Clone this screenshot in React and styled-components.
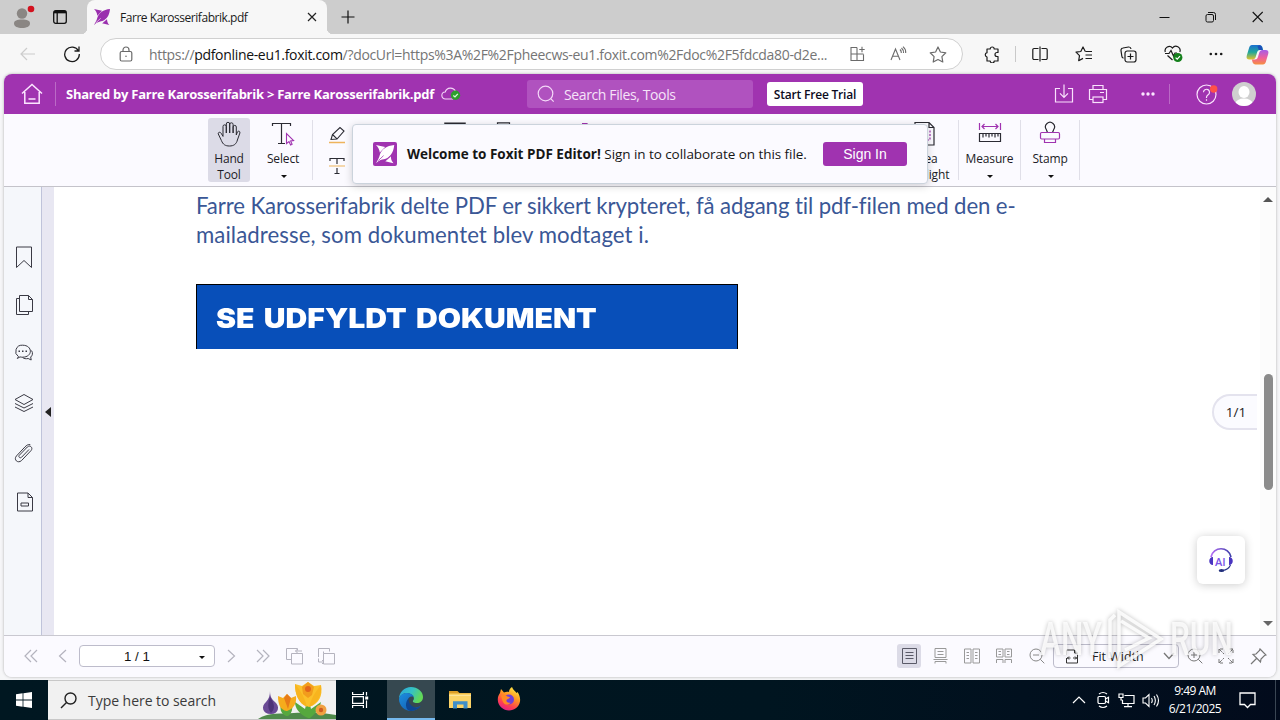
import React from 'react'
import styled, { createGlobalStyle } from 'styled-components'

function Svg({ w, h, ml, children, ...rest }) {
    return (
        <Icon width={w} height={h} viewBox={`0 0 ${w} ${h}`} $ml={ml} {...rest}>
            {children}
        </Icon>
    )
}

function FoxLogo({ size, ml, tile }) {
    return (
        <Icon width={size} height={size} viewBox="0 0 24 24" $ml={ml} stroke="none">
            {tile && <rect width="24" height="24" rx="2" fill="#a033b0" />}
            <g fill={tile ? '#fff' : '#9a2fae'} transform={tile ? 'translate(3 3) scale(.76)' : undefined}>
                <path d="M0 0l12 2.500L5 10C4.500 5.500 2.500 2.500 0 0z" />
                <path d="M24 0c-1 8-3 13-9 17-3 1.800-6 1.500-9 2.800C4 20.700 2 22 0 24c2-4 4-7 5-11C7 6 14 1 24 0z" />
                <path d="M23 24l-11-2.500 7.500-7c0 4 1 6.500 3.500 9.500z" />
                <path d="M19.500 14.500l-8 7" stroke={tile ? '#a033b0' : '#f7f7f7'} strokeWidth="1.200" fill="none" />
                <path d="M3 20.500L10 14" stroke={tile ? '#a033b0' : '#f7f7f7'} strokeWidth="1" fill="none" />
            </g>
        </Icon>
    )
}

function Tabs() {
    return (
        <TabStrip>
            <Svg w={26} h={26} ml={11} stroke="none">
                <circle cx="11" cy="9.500" r="5.200" fill="#8a8683" />
                <path d="M3 19.500c0-3 3-4 8-4s8 1 8 4-3.500 4.500-8 4.500-8-1.500-8-4.500z" fill="#8a8683" />
                <circle cx="20" cy="5" r="3.300" fill="#d3121f" />
            </Svg>
            <Svg w={14} h={14} ml={16} stroke="#111" strokeWidth="1.300">
                <rect x=".7" y=".7" width="12.600" height="12.600" rx="2" />
                <path d="M1 2.500h12M4.200 3v10" />
                <path d="M1 2h12" strokeWidth="2.200" />
            </Svg>
            <Tab>
                <FoxLogo size={16} ml={7} />
                <TabTitle>Farre Karosserifabrik.pdf</TabTitle>
                <Svg w={10} h={10} stroke="#222" strokeWidth="1.200">
                    <path d="M1 1l8 8M9 1l-8 8" />
                </Svg>
            </Tab>
            <Svg w={14} h={14} ml={14} stroke="#111" strokeWidth="1.200">
                <path d="M7 .5v13M.5 7h13" />
            </Svg>
            <Spacer />
            <Svg w={11} h={12} stroke="#111"><path d="M.5 6.500h10" /></Svg>
            <Svg w={11} h={12} ml={35} stroke="#111">
                <rect x="1" y="3.500" width="7.500" height="7.500" rx="1.500" />
                <path d="M3 1.500h5.500a2 2 0 0 1 2 2V9" />
            </Svg>
            <Svg w={11} h={12} ml={36} stroke="#111" strokeWidth="1.100">
                <path d="M.7 1l10 10M10.700 1l-10 10" />
            </Svg>
            <Gap $w={17} />
        </TabStrip>
    )
}

function AddressBar() {
    return (
        <NavBar>
            <Svg w={16} h={14} ml={20} stroke="#ccc" strokeWidth="1.200">
                <path d="M7 1L1 7l6 6M1 7h14" />
            </Svg>
            <Svg w={18} h={18} ml={27} stroke="#1b1b1b" strokeWidth="1.300">
                <path d="M15.500 6A7.300 7.300 0 1 0 16.300 9M16 1.500V6h-4.500" />
            </Svg>
            <UrlField>
                <Svg w={14} h={16} ml={18} stroke="#6a6a6a" strokeWidth="1.200">
                    <rect x="1.200" y="5.500" width="11.600" height="9.500" rx="1.500" />
                    <path d="M4 5.500V4a3 3 0 0 1 6 0v1.500" />
                    <circle cx="7" cy="10.200" r=".8" fill="#6a6a6a" stroke="none" />
                </Svg>
                <Url>https://<b>pdfonline-eu1.foxit.com</b>/?docUrl=https%3A%2F%2Fpheecws-eu1.foxit.com%2Fdoc%2F5fdcda80-d2e...</Url>
                <Spacer />
                <Svg w={16} h={16} stroke="#6b6b6b" strokeWidth="1.100">
                    <path d="M7 1.500H1v13h12.500V8.500M1 8h12.500M7 1.500v13M12 .8v5.400M9.300 3.500h5.400" />
                </Svg>
                <Svg w={17} h={16} ml={24} stroke="#6b6b6b" strokeWidth="1.100">
                    <path d="M1 14L5.500 3 10 14M2.600 10.300h5.800M10 3.500q1.500 1.500 1.300 3.500M11.500 2q2.300 2 2 5M13 .7q3 2.500 2.700 6.300" />
                </Svg>
                <Svg w={18} h={17} ml={22} stroke="#6b6b6b" strokeWidth="1.200" strokeLinejoin="round">
                    <path d="M9 1l2.400 5 5.400.8-3.900 3.800.9 5.400L9 13.500 4.200 16l.9-5.400L1.200 6.800l5.400-.8z" />
                </Svg>
                <Gap $w={15} />
            </UrlField>
            <Svg w={16} h={17} ml={21} stroke="#1b1b1b" strokeWidth="1.200" strokeLinejoin="round">
                <path d="M3 3h3.200a2 2 0 0 1 4 0H14v3.500h-1a2 2 0 0 0 0 4h1V15h-3.800a2 2 0 0 1-4 0H3v-4a2.200 2.200 0 0 1 0-4.300z" />
            </Svg>
            <VLine $h={16} $ml={15} $color="#c9c9c9" />
            <Svg w={16} h={16} ml={16} stroke="#1b1b1b" strokeWidth="1.200">
                <path d="M6.500 2.500H2a1.200 1.200 0 0 0-1.200 1.200v8.600A1.200 1.200 0 0 0 2 13.500h4.500M9.500 2.500H14a1.200 1.200 0 0 1 1.200 1.200v8.600a1.200 1.200 0 0 1-1.200 1.200H9.500M8 .5v15" />
            </Svg>
            <Svg w={18} h={16} ml={27} stroke="#1b1b1b" strokeWidth="1.200" strokeLinejoin="round">
                <path d="M10.300 5.500L8 1 5.800 5.500 1 6.200l3.500 3.500-.8 5L8 12.400M10.500 5.500H17M10.500 9H17M10.500 12.500H17" />
            </Svg>
            <Svg w={17} h={17} ml={27} stroke="#1b1b1b" strokeWidth="1.200">
                <rect x="5" y="5" width="11" height="11" rx="2.200" />
                <path d="M10.500 7.500v6M7.500 10.500h6M3.500 12.300A2.500 2.500 0 0 1 1.800 10L1 4.600A2.300 2.300 0 0 1 3 2L8.500 1a2.300 2.300 0 0 1 2.500 2" />
            </Svg>
            <Svg w={20} h={18} ml={27} stroke="#1b1b1b" strokeWidth="1.200">
                <path d="M1.300 7A4.200 4.200 0 0 1 8.500 3 4.200 4.200 0 0 1 15.800 7M1 8.500h4l2-3 2.500 5.500 1.500-3h2M3.500 10.500L8.500 15" />
                <circle cx="13.800" cy="12.500" r="4.600" fill="#14801c" stroke="none" />
                <path d="M11.600 12.600l1.600 1.500 2.800-3" stroke="#fff" />
            </Svg>
            <Svg w={14} h={4} ml={25} fill="#1b1b1b" stroke="none">
                <circle cx="1.800" cy="2" r="1.300" /><circle cx="7" cy="2" r="1.300" /><circle cx="12.200" cy="2" r="1.300" />
            </Svg>
            <Svg w={23} h={21} ml={23} stroke="none">
                <defs>
                    <linearGradient id="cpA" x1="0" y1="0" x2="0" y2="1">
                        <stop offset="0" stopColor="#1a6fd0" /><stop offset=".5" stopColor="#21a89a" /><stop offset="1" stopColor="#e4c32b" />
                    </linearGradient>
                    <linearGradient id="cpB" x1="0" y1="0" x2="0" y2="1">
                        <stop offset="0" stopColor="#a65be8" /><stop offset=".55" stopColor="#f05f9a" /><stop offset="1" stopColor="#f6903f" />
                    </linearGradient>
                </defs>
                <path d="M6 1h7.500c1.500 0 2.500 1 3 2.500l.6 2.500h-3c-2 0-2.600 1-3.200 3l-1.200 4c-.5 1.600-1.500 2.500-3 2.500H3.500C1 15.500 0 14 .8 11.500l2.400-8C3.700 2 4.500 1 6 1z" fill="url(#cpA)" />
                <path d="M13 1.200c1.600 0 2.500.8 3 2.300l.7 2.500h-3.900L11.500 2.500z" fill="#1c4fb8" />
                <path d="M17 20.500H9.500c-1.500 0-2.500-1-3-2.500l-.6-2.500h3c2 0 2.600-1 3.200-3l1.200-4C13.800 7 14.800 6 16.300 6h3.200c2.500 0 3.500 1.500 2.700 4l-2.400 8c-.5 1.500-1.300 2.500-2.800 2.500z" fill="url(#cpB)" />
            </Svg>
        </NavBar>
    )
}

function AppHeader() {
    return (
        <Header>
            <Svg w={22} h={22} ml={17} stroke="#fbe6ff" strokeWidth="1.500">
                <path d="M1 10.500L11 1.500l10 9M3.800 9v11.300h14.400V9M7.500 16h7" />
            </Svg>
            <VLine $h={24} $ml={12} $color="#bb6ac6" />
            <Crumbs>Shared by Farre Karosserifabrik &gt; Farre Karosserifabrik.pdf</Crumbs>
            <Svg w={20} h={14} stroke="#f3d6f7" strokeWidth="1.100">
                <path d="M12 12H4.500a3.500 3.500 0 0 1-.3-7A5.500 5.500 0 0 1 14.500 4.500" />
                <circle cx="14.500" cy="8.300" r="4.700" fill="#2f9e2f" stroke="none" />
                <path d="M12.300 8.400l1.700 1.500 2.800-3" stroke="#d8ffd8" strokeWidth="1.300" />
            </Svg>
            <SearchBox>
                <Svg w={18} h={18} stroke="#f3d6f7" strokeWidth="1.200">
                    <circle cx="8.500" cy="8.500" r="7.300" /><path d="M13.700 13.700l3 3" />
                </Svg>
                <span>Search Files, Tools</span>
            </SearchBox>
            <TrialButton>Start Free Trial</TrialButton>
            <Spacer />
            <Svg w={20} h={20} stroke="#f9e2fc" strokeWidth="1.200">
                <path d="M6 4.500H1.500v13.500h17V4.500H14M10 .5V13M6 9.300l4 4 4-4" />
            </Svg>
            <Svg w={20} h={20} ml={14} stroke="#f9e2fc" strokeWidth="1.200">
                <path d="M5 5V1.500h10V5M5 15.500H1.500V5.500h17v10H15M12 8.500h4" />
                <rect x="5" y="13" width="10" height="5.500" />
            </Svg>
            <Svg w={14} h={4} ml={33} fill="#fbe6ff" stroke="none">
                <circle cx="2" cy="2" r="1.700" /><circle cx="7" cy="2" r="1.700" /><circle cx="12" cy="2" r="1.700" />
            </Svg>
            <VLine $h={20} $ml={14} $color="#bb6ac6" />
            <Svg w={22} h={22} ml={26} stroke="#f9e2fc" strokeWidth="1.200">
                <circle cx="10.500" cy="11.500" r="9.500" />
                <path d="M7.500 9.300a3 3 0 1 1 4.600 2.500c-1 .7-1.600 1.200-1.600 2.500v.7M10.500 16.300v1.400" />
                <circle cx="17.700" cy="6" r="3.700" fill="#ff5148" stroke="none" />
            </Svg>
            <Svg w={24} h={24} ml={14} stroke="none">
                <clipPath id="face"><circle cx="12" cy="12" r="12" /></clipPath>
                <g clipPath="url(#face)">
                    <rect width="24" height="24" fill="#cfcfcf" />
                    <ellipse cx="12" cy="10" rx="5.500" ry="6" fill="#fff" />
                    <ellipse cx="12" cy="21.500" rx="8.500" ry="5" fill="#fff" />
                </g>
            </Svg>
            <Gap $w={20} />
        </Header>
    )
}

function Ribbon() {
    return (
        <RibbonBar>
            <Gap $w={204} />
            <Tool $w={42} $active>
                <Svg w={24} h={26} stroke="#2b2b33" strokeWidth="1" strokeLinejoin="round" strokeLinecap="round">
                    <path d="M6 15V5.500a1.600 1.600 0 0 1 3.300 0V12 3a1.700 1.700 0 0 1 3.400 0v9V3.500a1.700 1.700 0 0 1 3.400 0V12 6a1.600 1.600 0 0 1 3.200 0v8l1-3c1-1.600 3.100-.8 2.600 1l-2.500 7c-1 4-3.500 6-8 6-4 0-6.500-1.500-8-5.500L1.300 13c-.5-1.700 1.700-2.500 2.700-1z" />
                </Svg>
                <ToolName>Hand</ToolName>
                <ToolName>Tool</ToolName>
            </Tool>
            <Tool $w={48} $ml={9}>
                <Svg w={24} h={26} stroke="#2b2b33" strokeWidth="1.200">
                    <path d="M1.500 5V2.500h18V5M10.500 2.500v20M7 22.500h7" />
                    <path d="M15.500 12.500v10l2.500-2 1.600 3.500 1.500-.7-1.500-3.400 3-.4z" stroke="#a033b0" fill="#fbfaff" strokeWidth="1.100" />
                </Svg>
                <ToolName>Select</ToolName>
                <Caret />
            </Tool>
            <VLine $h={60} $ml={5} $color="#e0dfe8" />
            <SmallTools>
                <Svg w={18} h={18} stroke="#2b2b33" strokeWidth="1.100">
                    <path d="M3 13.500l1.500-5L12 1.500l4 3.500-7 8zM4.500 8.500L9 12.800" />
                    <path d="M1 16.500h16" stroke="#eeb45c" strokeWidth="1.300" />
                </Svg>
                <Svg w={18} h={18} stroke="#2b2b33" strokeWidth="1.200">
                    <path d="M2 4V1.500h14V4M9 1.500V7M9 11v5.500M6.500 16.500h5" />
                    <path d="M1 9h16" stroke="#eeb45c" />
                </Svg>
            </SmallTools>
            <Svg w={22} h={26} ml={98} stroke="#2b2b33" strokeWidth="1.500"><path d="M1 5.200h20v20H1z" /></Svg>
            <Svg w={16} h={26} ml={30} stroke="#2b2b33" strokeWidth="1.200"><path d="M1.500 25V4.800h12V25" /></Svg>
            <Svg w={12} h={26} ml={67} stroke="#a033b0" strokeWidth="1.200"><path d="M3 5.500h5v18" /></Svg>
            <Tool $w={52} $ml={308}>
                <Svg w={24} h={26} stroke="#2b2b33" strokeWidth="1.200">
                    <path d="M2 24V1.500h14l5 5V24zM16 1.500v5h5" />
                    <path d="M6 10h11v9H6z" stroke="#a033b0" strokeDasharray="2 1.500" />
                </Svg>
                <ToolName>Area</ToolName>
                <ToolName>Highlight</ToolName>
            </Tool>
            <VLine $h={60} $ml={7} $color="#e0dfe8" />
            <Tool $w={61}>
                <Svg w={24} h={26} stroke="#2b2b33" strokeWidth="1.200">
                    <path d="M1.500 2v7M22.500 2v7M4 5.500h16M6.500 3L4 5.500 6.500 8M17.500 3L20 5.500 17.500 8" stroke="#a033b0" />
                    <path d="M1.500 12.500h21v8h-21zM5 12.500v4M8 12.500v3M11 12.500v4M14 12.500v3M17 12.500v4M20 12.500v3" />
                </Svg>
                <ToolName>Measure</ToolName>
                <Caret />
            </Tool>
            <VLine $h={60} $color="#e0dfe8" />
            <Tool $w={58}>
                <Svg w={24} h={26} stroke="#2b2b33" strokeWidth="1.200">
                    <path d="M9.500 11.500L8.300 8.500a4.500 4.500 0 1 1 7.400 0L14.500 11.500" />
                    <rect x="2.500" y="11.500" width="19" height="6.500" rx="1.200" stroke="#a033b0" />
                    <path d="M6.500 18v3.500h11V18" stroke="#a033b0" />
                </Svg>
                <ToolName>Stamp</ToolName>
                <Caret />
            </Tool>
            <VLine $h={60} $color="#e0dfe8" />
            <Welcome>
                <FoxLogo size={24} tile />
                <p><b>Welcome to Foxit PDF Editor!</b> <span>Sign in to collaborate on this file.</span></p>
                <SignIn>Sign In</SignIn>
            </Welcome>
        </RibbonBar>
    )
}

function SidePanel() {
    return (
        <Side>
            <Svg w={22} h={24}><path d="M3.500 2h15v20.500L11 15.500l-7.500 7z" /></Svg>
            <Svg w={22} h={24}>
                <path d="M6.500 1.500h9l4 4v12h-13zM15.500 1.500v4h4M6.500 4.500h-3v16h12v-3" />
            </Svg>
            <Svg w={22} h={24}>
                <path d="M5.500 13.700A6.300 6.300 0 0 1 9.500 2.200c10.500 0 10.500 12 0 12-1 0-1.700-.1-2.500-.3L4.300 15.500zM18.500 7.500c1.700 2.500 1 5.200-.8 6.500l.5 3-3-1.500c-2.200.5-4.200.2-5.700-1" />
                <path d="M5.500 8.300h1.500M9 8.300h1.500M12.500 8.300H14" strokeWidth="1.500" />
            </Svg>
            <Svg w={22} h={24}>
                <path d="M11 2.500l9 5-9 5-9-5zM2 11.500l9 4.500 9-4.500M2 15l9 4.500 9-4.500" />
            </Svg>
            <Svg w={22} h={24}>
                <path d="M16 8.500l-7.500 7.800c-1.500 1.400-3.500-.5-2.200-2l8-8.300c2.700-2.500 6.200.8 3.700 3.600l-9.500 10c-3.700 3.300-8.300-1-5-4.700l8.500-9c1.500-1.500 3-2.800 5.300-2.200" />
            </Svg>
            <Svg w={22} h={24}>
                <path d="M4.500 3h10.500l4.500 4.500V21h-15zM15 3v4.500h4.500M8 13h7.500v3H8z" />
            </Svg>
        </Side>
    )
}

function AiHeadset() {
    return (
        <AiButton>
            <Svg w={26} h={26} stroke="#8b5cf0" strokeWidth="1.500">
                <defs>
                    <linearGradient id="arc" x1="0" x2="1"><stop offset="0" stopColor="#b46cf5" /><stop offset="1" stopColor="#3d3fa8" /></linearGradient>
                </defs>
                <path d="M3 10C5 -1 21 -1 23 10" stroke="url(#arc)" strokeWidth="1.700" />
                <path d="M22.500 18c-1.500 3.500-4 5-8 5.500" stroke="#29338f" strokeWidth="1.100" />
                <ellipse cx="13.500" cy="23.500" rx="2.800" ry="1.600" fill="#22307c" stroke="none" />
                <path d="M5 10v8c-5 0-5-8 0-8zM21 10v8c5 0 5-8 0-8z" fill="#4a35c0" stroke="none" />
            </Svg>
            <span>AI</span>
        </AiButton>
    )
}

function Viewer() {
    return (
        <Main>
            <SidePanel />
            <Gutter><i /></Gutter>
            <Page>
                <Line $ls={-0.1}>Farre Karosserifabrik delte PDF er sikkert krypteret, få adgang til pdf-filen med den e-</Line>
                <Line $ls={0.08}>mailadresse, som dokumentet blev modtaget i.</Line>
                <Banner><span>SE UDFYLDT DOKUMENT</span></Banner>
            </Page>
            <Floating>
                <PagePill>1/1</PagePill>
                <AiHeadset />
            </Floating>
            <ScrollTrack>
                <Arrow $up />
                <Thumb />
                <Arrow />
            </ScrollTrack>
        </Main>
    )
}

function StatusBar() {
    return (
        <Footer>
            <Svg w={14} h={14} ml={20} strokeWidth="1.200"><path d="M7 1L1 7l6 6M13 1L7 7l6 6" /></Svg>
            <Svg w={9} h={14} ml={20} strokeWidth="1.200"><path d="M8 1L1.500 7 8 13" /></Svg>
            <PageInput>1 / 1<Caret /></PageInput>
            <Svg w={9} h={14} ml={12} strokeWidth="1.200"><path d="M1 1l6.500 6L1 13" /></Svg>
            <Svg w={14} h={14} ml={20} strokeWidth="1.200"><path d="M1 1l6 6-6 6M7 1l6 6-6 6" /></Svg>
            <Svg w={17} h={17} ml={16}><path d="M5.500 5.500h11v10.500h-11zM5.500 11.500h-5V.5h11v2M16 3H9.500M11.500 1l-2 2 2 2" /></Svg>
            <Svg w={17} h={17} ml={15}><path d="M5.500 5.500h11v10.500h-11zM5.500 5.500V3.500M.5 9V.5h11v3M.5 10.500V14H6M4 12l2 2-2 2" /></Svg>
            <Spacer />
            <ViewMode>
                <Svg w={15} h={16} stroke="#5a5a68"><path d="M.5.500h14v15H.5zM3.500 4.500h8M3.500 7.500h8M3.500 10.500h8" /></Svg>
            </ViewMode>
            <Svg w={15} h={16} ml={12} stroke="#999"><path d="M2 .5h11v9H2zM4.500 3.500h6M4.500 6.500h6M.5 11.500h14M2 15.500v-2h11v2" /></Svg>
            <Svg w={16} h={16} ml={16} stroke="#999"><path d="M.5 1h6.500v14H.5zM9 1h6.500v14H9zM2.500 4.500h2.500M2.500 7.500h2.500M2.500 10.500h2.500M11 4.500h2.500M11 7.500h2.500M11 10.500h2.500" /></Svg>
            <Svg w={16} h={16} ml={16} stroke="#999"><path d="M.5 1h6.500v8H.5zM9 1h6.500v8H9zM2.500 3.500h2.500M2.500 6.500h2.500M11 3.500h2.500M11 6.500h2.500M.5 15v-3.500H7V15M9 15v-3.500h6.500V15" /></Svg>
            <Svg w={16} h={16} ml={17} stroke="#888"><circle cx="7" cy="7" r="6" /><path d="M4 7h6M11.300 11.300l4 4" /></Svg>
            <ZoomSelect>
                <Svg w={14} h={15} stroke="#333"><path d="M1.500 6V1h8l3 3v10M1.500 14V9M9.500 1v3h3M1.500 14h11M2 9h3.500M8 9h4M4 7.500L2.500 9 4 10.500M10 7.500L11.500 9 10 10.500" /></Svg>
                <span>Fit Width</span>
                <Svg w={12} h={8} stroke="#777" strokeWidth="1.300"><path d="M1 1l5 5.500L11 1" /></Svg>
            </ZoomSelect>
            <Svg w={16} h={16} ml={8} stroke="#777"><circle cx="7" cy="7" r="6" /><path d="M4 7h6M7 4v6M11.300 11.300l4 4" /></Svg>
            <Svg w={16} h={16} ml={15} stroke="#777"><path d="M1 5V1h4M1 1l5 5M11 1h4v4M15 1l-5 5M1 11v4h4M1 15l5-5M15 11v4h-4M15 15l-5-5" strokeDasharray="4 1" /></Svg>
            <Svg w={17} h={17} ml={16} stroke="#777" strokeWidth="1.200"><path d="M10 1l6 6-1.500.5-3.500 3.500-.5 3L3 6.500 6 6l3.500-3.500zM6.500 10.500L1 16" /></Svg>
            <Gap $w={9} />
        </Footer>
    )
}

function Crocus() {
    return (
        <Svg w={80} h={38} stroke="none">
            <path d="M2 38c10-7 24-5 36-6s28-1 42 2v4z" fill="#4f8a4b" />
            <path d="M30 35c-6-3-6-8-5-12l5 6 6-5c1 5-1 9-4 11zM52 37c-9-4-13-10-13-16l10 7 3-12 3 12 10-7c-1 7-6 12-11 16z" fill="#56a83e" />
            <path d="M14 10c0 4 1 8 5 11 5 4 4 12-4 12-9 0-10-8-5-12 3-3 4-7 4-11z" fill="#6a4a95" />
            <path d="M14 16c-2 6-3 11 1 16 5-5 3-10-1-16z" fill="#4d3278" />
            <path d="M22 15l5 2 4-4 4 4 5-2c1 8-3 13-9 15-7-1-9-7-9-15z" fill="#f6ac1c" />
            <path d="M28 17l3-4 4 4-3 11z" fill="#e77b18" />
            <path d="M39 3l7 2 6-4 6 4 7-1c2 11-2 19-12 22-10-3-14-12-14-23z" fill="#fbc02a" />
            <path d="M46 6l6-5 6 5-2 8-4 3-5-4z" fill="#f29c1c" />
            <circle cx="52" cy="8" r="3" fill="#e2661a" />
            <path d="M39 3c4 5 9 11 12 23-9-4-12-13-12-23zM65 4c-4 5-9 11-12 22 9-4 13-12 12-22z" fill="#f8b41e" />
            <circle cx="65" cy="29" r="5.500" fill="#f0a141" /><circle cx="65" cy="29" r="2.200" fill="#cf5c20" />
        </Svg>
    )
}

function Taskbar() {
    return (
        <Bar>
            <StartCell>
                <Svg w={16} h={16} fill="#fff" stroke="none">
                    <path d="M0 2.200l6.600-.9v6.300H0zM7.400 1.200L16 0v7.600H7.400zM0 8.400h6.600v6.300L0 13.800zM7.400 8.400H16V16l-8.600-1.200z" />
                </Svg>
            </StartCell>
            <TaskSearch>
                <Svg w={17} h={17} ml={12} stroke="#222" strokeWidth="1.400">
                    <circle cx="10.500" cy="6.500" r="5.500" /><path d="M6.500 10.500L1 16" />
                </Svg>
                <span>Type here to search</span>
                <Spacer />
                <Crocus />
            </TaskSearch>
            <Svg w={17} h={16} ml={16} stroke="#fff" strokeWidth="1.200">
                <path d="M.6 0v2.500h10.800V0M.6 16v-2.500h10.800V16M.6 4.700h10.800v6.600H.6zM14.500 0v3.500M14.500 8.500V16" />
                <rect x="13.200" y="4.500" width="3" height="3" fill="#fff" stroke="none" />
            </Svg>
            <AppCell $active>
                <Svg w={24} h={24} stroke="none">
                    <defs>
                        <linearGradient id="edgeTop" x1="0" x2="1" y2=".4"><stop offset="0" stopColor="#2aa4dc" /><stop offset=".55" stopColor="#35c2c5" /><stop offset="1" stopColor="#62d957" /></linearGradient>
                        <linearGradient id="edgeLow" x1="0" y1="0" x2="1" y2="1"><stop offset="0" stopColor="#1c8fe0" /><stop offset="1" stopColor="#1254a8" /></linearGradient>
                    </defs>
                    <path d="M0 12C0 5 5.500 0 12 0s12 4.500 12 10c0 4-3 6-6 6-3.500 0-4.500-1.200-4-2.200.8-1 .9-1.800.9-2.800C14.500 8.500 11.500 6 8 6c-4 0-7 2.500-8 6z" fill="url(#edgeTop)" />
                    <path d="M0 12c1-4 4-6 8-6 3 0 6 1.500 7 4-3-1.500-6.500.5-6.500 4 0 4 4 7.500 9 6.500 1.500-.3 3-1 4.200-1.700C19.500 22 16 24 12 24 5.500 24 0 18.500 0 12z" fill="url(#edgeLow)" />
                    <path d="M12 24c-6 0-7-10-1-13.500C8.500 9.500 8.500 19 17 20.700c1.600 0 3.300-.7 4.700-1.900C19.500 22 16 24 12 24z" fill="#0f4590" />
                </Svg>
            </AppCell>
            <AppCell>
                <Svg w={22} h={19} stroke="none">
                    <path d="M0 1h8.500l2 2H22v3H0z" fill="#dd9e26" />
                    <path d="M0 3.500h22V18H0z" fill="#fbd367" />
                    <path d="M0 5h22v1H0z" fill="#fde39a" />
                    <path d="M4 18.500v-7.200h14.500v7.200H14.500v-4H8v4z" fill="#3f8fc9" />
                </Svg>
            </AppCell>
            <AppCell>
                <Svg w={24} h={24} stroke="none">
                    <defs>
                        <linearGradient id="fire" x1=".8" y1="0" x2=".3" y2="1"><stop offset="0" stopColor="#fff04a" /><stop offset=".4" stopColor="#ff9a22" /><stop offset=".75" stopColor="#ff3f50" /><stop offset="1" stopColor="#e0208a" /></linearGradient>
                    </defs>
                    <path d="M3 6l1-4 3 3.500C9 4.500 10.500 4.500 12 5c0-2 1-4 3-5 1 3 3.500 4 4.500 6l1-1c2 3 3 6 2.500 9.500C22 20 17.500 23.500 12 23.500S1 19 .8 13C.7 10 1.500 8 3 6z" fill="url(#fire)" />
                    <circle cx="12" cy="12.500" r="5" fill="#7040d8" />
                    <path d="M4 8.500c3-1 5-.5 6.500 1 1 .3 2 .3 2.500.7-.5 1.500-2.500 1.500-3.500 2.800C9 15 11 16.500 13.500 15.500 12 18.500 7 18.500 5.500 14z" fill="#ff8a24" />
                </Svg>
            </AppCell>
            <Spacer />
            <Svg w={14} h={8} stroke="#fff" strokeWidth="1.200"><path d="M1 7l6-6 6 6" /></Svg>
            <Svg w={13} h={18} ml={11} stroke="#fff" strokeWidth="1.200">
                <rect x="1" y="5.500" width="7.500" height="7" rx="1.200" /><path d="M8.500 8l3-1.800v5.600l-3-1.800M2 3q4-3 8 0M2 15q4 3 8 0" />
            </Svg>
            <Svg w={17} h={15} ml={8} stroke="#fff" strokeWidth="1.200">
                <path d="M6.500 2.500h9.500v8H4.500V7M10 10.500v3M6 13.700h8M1 1h4v3.500H1zM3 4.500V7h1.500" />
            </Svg>
            <Svg w={18} h={15} ml={7} stroke="#fff" strokeWidth="1.100">
                <path d="M1 5h2.500L7 1.500v12L3.500 10H1zM9.500 5q1.500 2.500 0 5M12 3q2.700 4.500 0 9M14.500 1.500q4 6 0 12" />
            </Svg>
            <Clock><span>9:49 AM</span><span>6/21/2025</span></Clock>
            <Svg w={17} h={17} ml={13} stroke="#fff" strokeWidth="1.300">
                <path d="M1 1h15v11.500h-4.500l-3 3-3-3H1z" />
            </Svg>
            <VLine $h={40} $ml={19} $color="#3a4653" />
            <Gap $w={4} />
        </Bar>
    )
}

function App() {
    return (
        <Screen>
            <GlobalStyle />
            <Tabs />
            <AddressBar />
            <Frame>
                <AppHeader />
                <Ribbon />
                <Viewer />
                <StatusBar />
            </Frame>
            <Taskbar />
            <Watermark>
                <span>ANY</span>
                <svg width="58" height="62" viewBox="0 0 58 62" fill="none" stroke="#fff" strokeOpacity=".85" strokeWidth="3.500">
                    <path d="M3 50V12l5-5M12 58V4l42 27z M18 42l24-12L14 13" />
                </svg>
                <span>RUN</span>
            </Watermark>
        </Screen>
    )
}

const GlobalStyle = createGlobalStyle`
    * { box-sizing: border-box; }
    body { margin: 0; overflow: hidden; font-family: "Open Sans", "Noto Sans", sans-serif; }
    p { margin: 0; }
`;

const Screen = styled.div`
    position: relative;
    width: 1280px;
    height: 720px;
    display: flex;
    flex-direction: column;
    overflow: hidden;
    background: #f6f6f8;
`;

const Icon = styled.svg`
    flex: none;
    display: block;
    margin-left: ${p => p.$ml || 0}px;
    fill: ${p => p.fill || 'none'};
`;

const Spacer = styled.div`
    flex: 1;
`;

const Gap = styled.div`
    flex: none;
    width: ${p => p.$w}px;
`;

const VLine = styled.div`
    flex: none;
    width: 1px;
    height: ${p => p.$h}px;
    margin-left: ${p => p.$ml || 0}px;
    background: ${p => p.$color};
`;

const TabStrip = styled.div`
    flex: none;
    height: 34px;
    display: flex;
    align-items: center;
    background: #cdcdcd;
`;

const Tab = styled.div`
    position: relative;
    width: 240px;
    height: 34px;
    margin-left: 20px;
    display: flex;
    align-items: center;
    background: #f7f7f7;
    border-radius: 8px 8px 0 0;
    &::before, &::after {
        content: '';
        position: absolute;
        bottom: 0;
        width: 6px;
        height: 6px;
    }
    &::before {
        left: -6px;
        background: radial-gradient(circle at 0 0, #cdcdcd 6px, #f7f7f7 6.5px);
    }
    &::after {
        right: -6px;
        background: radial-gradient(circle at 100% 0, #cdcdcd 6px, #f7f7f7 6.5px);
    }
`;

const TabTitle = styled.span`
    width: 187px;
    margin-left: 10px;
    font-size: 12px;
    letter-spacing: -0.46px;
    white-space: nowrap;
    color: #1b1b1b;
`;

const NavBar = styled.div`
    flex: none;
    height: 40px;
    display: flex;
    align-items: center;
    background: #f7f7f7;
`;

const UrlField = styled.div`
    flex: none;
    width: 863px;
    height: 32px;
    margin-left: 19px;
    display: flex;
    align-items: center;
    background: #fff;
    border: 1px solid #d0d0d0;
    border-radius: 16px;
`;

const Url = styled.span`
    margin-left: 16px;
    font-size: 14px;
    letter-spacing: -0.32px;
    white-space: nowrap;
    color: #757575;
    b {
        font-weight: 400;
        color: #111;
    }
`;

const Frame = styled.div`
    flex: none;
    height: 603px;
    margin: 0 4px 3px;
    display: flex;
    flex-direction: column;
    border-radius: 8px;
    overflow: hidden;
    box-shadow: 0 0 3px rgba(0, 0, 0, 0.3);
`;

const Header = styled.div`
    flex: none;
    height: 40px;
    display: flex;
    align-items: center;
    background: #a033b0;
`;

const Crumbs = styled.span`
    width: 375px;
    margin-left: 10px;
    font-size: 13px;
    font-weight: 700;
    letter-spacing: -0.25px;
    white-space: nowrap;
    color: #fff;
`;

const SearchBox = styled.div`
    width: 226px;
    height: 28px;
    margin-left: 66px;
    padding-left: 10px;
    display: flex;
    align-items: center;
    border-radius: 3px;
    background: #b052bf;
    font-size: 14px;
    letter-spacing: -0.38px;
    color: #f6e3f9;
    span {
        margin-left: 9px;
    }
`;

const TrialButton = styled.button`
    width: 96px;
    height: 24px;
    margin-left: 14px;
    padding: 0;
    border: 0;
    border-radius: 3px;
    background: #fff;
    font: 600 12px "Open Sans", sans-serif;
    letter-spacing: -0.2px;
    white-space: nowrap;
    color: #0c0c1e;
`;

const RibbonBar = styled.div`
    position: relative;
    flex: none;
    height: 73px;
    padding-top: 4px;
    display: flex;
    background: #fbfaff;
    border-bottom: 1px solid #c4c3ca;
    > ${VLine} {
        margin-top: 2px;
    }
`;

const Tool = styled.div`
    flex: none;
    width: ${p => p.$w}px;
    height: 64px;
    margin-left: ${p => p.$ml || 0}px;
    padding-top: 3px;
    display: flex;
    flex-direction: column;
    align-items: center;
    border-radius: 3px;
    background: ${p => p.$active ? '#dcdbe7' : 'transparent'};
    > ${Icon} {
        margin-bottom: 4px;
    }
`;

const ToolName = styled.span`
    font-size: 12px;
    line-height: 16px;
    letter-spacing: -0.15px;
    color: #1c1c26;
`;

const Caret = styled.i`
    width: 0;
    height: 0;
    margin: 8px 0 0 1px;
    border: 3px solid transparent;
    border-top-color: #111;
    border-bottom: 0;
`;

const SmallTools = styled.div`
    margin-left: 15px;
    padding-top: 8px;
    display: flex;
    flex-direction: column;
    gap: 13px;
`;

const Welcome = styled.div`
    position: absolute;
    left: 348px;
    top: 10px;
    width: 576px;
    height: 60px;
    padding-left: 20px;
    display: flex;
    align-items: center;
    background: #fbfaff;
    border: 1px solid #cbd3dc;
    border-radius: 4px;
    box-shadow: 0 2px 8px rgba(0, 0, 0, 0.18);
    p {
        width: 400px;
        margin-left: 10px;
        font-size: 13.5px;
        white-space: nowrap;
        color: #161616;
    }
    b {
        font-weight: 700;
    }
    span {
        letter-spacing: -0.06px;
    }
`;

const SignIn = styled.button`
    width: 84px;
    height: 24px;
    margin-left: 16px;
    padding: 0;
    border: 0;
    border-radius: 3px;
    background: #a033b0;
    font: 14px "Liberation Sans", Arial, sans-serif;
    color: #fff;
`;

const Main = styled.div`
    flex: none;
    height: 448px;
    display: flex;
    background: #fff;
`;

const Side = styled.div`
    width: 38px;
    padding: 58px 0 0 9px;
    display: flex;
    flex-direction: column;
    gap: 25px;
    background: #f5f7fb;
    border-right: 1px solid #bfc3da;
    stroke: #3a3a44;
    stroke-width: 1;
`;

const Gutter = styled.div`
    width: 12px;
    padding-top: 2px;
    display: flex;
    align-items: center;
    background: #e8e7f2;
    i {
        margin-left: 3px;
        border: 5px solid transparent;
        border-left: 0;
        border-right: 6px solid #222;
    }
`;

const Page = styled.div`
    flex: 1;
    padding: 4px 0 0 142px;
`;

const Line = styled.p`
    font: 22.2px/29px Lato, sans-serif;
    font-variant-ligatures: none;
    letter-spacing: ${p => p.$ls}px;
    white-space: nowrap;
    color: #3a5796;
`;

const Banner = styled.div`
    width: 542px;
    height: 65px;
    margin-top: 35px;
    padding: 2px 0 0 19px;
    display: flex;
    align-items: center;
    background: #084fb9;
    border: 1px solid #000;
    border-bottom: 0;
    font: 900 27px Inter, sans-serif;
    word-spacing: 3px;
    white-space: nowrap;
    color: #fff;
    span {
        transform: scaleX(1.115);
        transform-origin: 0 50%;
    }
`;

const Floating = styled.div`
    width: 60px;
    padding: 207px 0 0 0;
    display: flex;
    flex-direction: column;
    align-items: flex-end;
`;

const PagePill = styled.div`
    width: 45px;
    height: 36px;
    margin-right: 3px;
    padding-left: 1px;
    display: flex;
    align-items: center;
    justify-content: center;
    border: 2px solid #e4e3ee;
    border-right: 0;
    border-radius: 18px 0 0 18px;
    background: #fbfbff;
    font-size: 13.5px;
    color: #222;
`;

const AiButton = styled.div`
    position: relative;
    width: 48px;
    height: 48px;
    margin: 106px 15px 0 0;
    display: flex;
    align-items: center;
    justify-content: center;
    border-radius: 6px;
    background: #fff;
    box-shadow: 0 1px 10px rgba(0, 0, 0, 0.2);
    span {
        position: absolute;
        left: 18px;
        top: 19px;
        font: 600 11px/14px "Open Sans", sans-serif;
        color: #7a52e8;
    }
`;

const ScrollTrack = styled.div`
    width: 16px;
    padding: 10px 0 9px;
    display: flex;
    flex-direction: column;
    align-items: center;
    justify-content: space-between;
    background: #fcfcfc;
`;

const Arrow = styled.i`
    border: 5px solid transparent;
    border-top: ${p => p.$up ? 0 : '5px solid #666'};
    border-bottom: ${p => p.$up ? '5px solid #555' : 0};
`;

const Thumb = styled.div`
    width: 9px;
    height: 116px;
    margin-top: 41px;
    border-radius: 5px;
    background: #8b8b8b;
`;

const Footer = styled.div`
    flex: none;
    height: 42px;
    padding-bottom: 1px;
    display: flex;
    align-items: center;
    background: #fbfaff;
    border-top: 1px solid #c9c8d0;
    stroke: #b4b3be;
`;

const PageInput = styled.div`
    width: 136px;
    height: 22px;
    margin-left: 12px;
    padding: 0 9px 0 44px;
    display: flex;
    align-items: center;
    justify-content: space-between;
    border: 1px solid #bdbccb;
    border-radius: 4px;
    background: #fff;
    font: 13.3px "Liberation Sans", Arial, sans-serif;
    color: #111;
    ${Caret} {
        margin-top: 2px;
    }
`;

const ViewMode = styled.div`
    width: 24px;
    height: 24px;
    display: flex;
    align-items: center;
    justify-content: center;
    border-radius: 3px;
    background: #dcdbe7;
`;

const ZoomSelect = styled.div`
    width: 126px;
    height: 24px;
    margin-left: 8px;
    padding: 0 3px 0 11px;
    display: flex;
    align-items: center;
    border: 1px solid #bdbccb;
    border-radius: 4px;
    font-size: 12.500px;
    color: #222;
    span {
        flex: 1;
        margin-left: 13px;
    }
`;

const Bar = styled.div`
    flex: none;
    height: 40px;
    display: flex;
    align-items: center;
    background: linear-gradient(90deg, #001721, #001520 60%, #020b1c);
`;

const StartCell = styled.div`
    width: 48px;
    display: flex;
    justify-content: center;
`;

const TaskSearch = styled.div`
    width: 288px;
    height: 40px;
    display: flex;
    align-items: center;
    background: #f1f1f1;
    border: 1px solid #c8c8c8;
    border-left: 0;
    border-right: 0;
    font-size: 14px;
    white-space: nowrap;
    color: #3b3b3b;
    span {
        margin-left: 11px;
        letter-spacing: -0.04px;
    }
`;

const AppCell = styled.div`
    width: ${p => p.$active ? 48 : 49}px;
    height: 40px;
    margin-left: ${p => p.$active ? 18 : 0}px;
    display: flex;
    align-items: center;
    justify-content: center;
    background: ${p => p.$active ? '#364850' : 'transparent'};
    border-bottom: 2px solid ${p => p.$active ? '#76b9ed' : 'transparent'};
`;

const Clock = styled.div`
    width: 62px;
    margin-left: 4px;
    display: flex;
    flex-direction: column;
    align-items: center;
    font-size: 12px;
    line-height: 18px;
    letter-spacing: -0.5px;
    color: #fff;
`;

const Watermark = styled.div`
    position: absolute;
    left: 1040px;
    top: 608px;
    width: 192px;
    height: 62px;
    display: flex;
    align-items: center;
    justify-content: space-between;
    filter: drop-shadow(0 0 2px rgba(0, 0, 0, 0.3));
    pointer-events: none;
    span {
        width: 62px;
        font: 500 47px/62px Roboto, sans-serif;
        color: rgba(255, 255, 255, 0.8);
        transform: scaleX(0.67);
        transform-origin: 0 50%;
    }
`;

export default App
